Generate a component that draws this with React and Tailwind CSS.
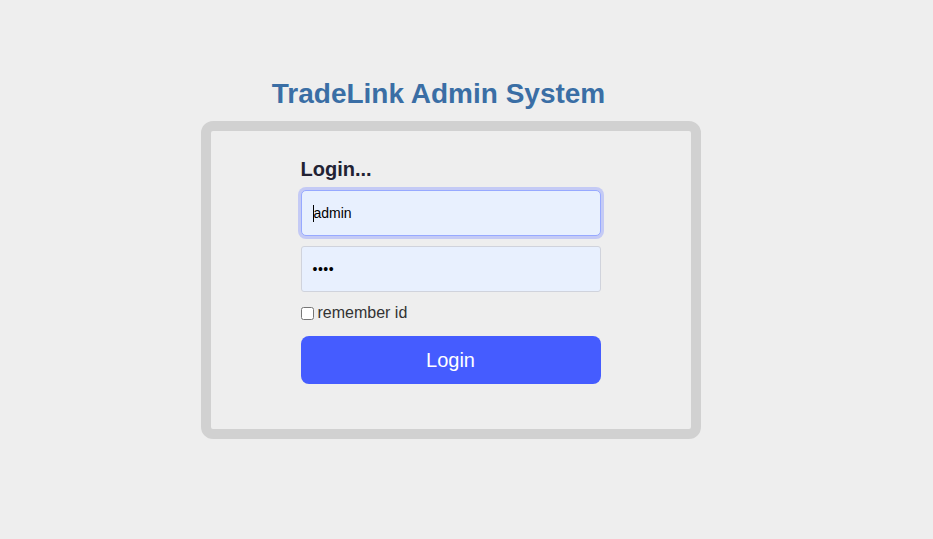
export default function App() {
  return (
    <div className="min-h-[539px] w-full bg-[#eeeeee] flex flex-col items-center pt-[77px] pr-[32px]" style={{ fontFamily: '"Liberation Sans", Arial, sans-serif' }}>
      <h1 className="text-[28px] leading-[34px] font-bold text-[#3a6ea5] mr-[24px]">TradeLink Admin System</h1>
      <div className="mt-[10px] w-[500px] h-[318px] border-[10px] border-[#d1d1d1] rounded-[12px] bg-[#eeeeee] flex flex-col items-center pt-[26px]">
        <div className="w-[300px] flex flex-col">
          <div className="text-[20px] leading-[24px] font-bold text-[#222233] mb-[9px]">Login...</div>
          <div className="h-[46px] rounded-[5px] border border-[#97a9ff] ring-[3px] ring-[#c4caf5] bg-[#e8f0fe] flex items-center px-[11px]">
            <span className="w-px h-[17px] bg-black"></span>
            <span className="text-[14px] text-black">admin</span>
          </div>
          <div className="mt-[10px] h-[46px] rounded-[3px] border border-[#d0d3dc] bg-[#e8f0fe] flex items-center px-[11px]">
            <span className="text-[14px] text-black tracking-[0.5px]">••••</span>
          </div>
          <label className="mt-[12px] flex items-center gap-[4px] text-[16px] leading-[18px] text-[#333]">
            <input type="checkbox" className="w-[13px] h-[13px] m-0" />
            remember id
          </label>
          <button className="mt-[14px] h-[48px] rounded-[8px] bg-[#455cff] text-white text-[20px]">Login</button>
        </div>
      </div>
    </div>
  );
}
